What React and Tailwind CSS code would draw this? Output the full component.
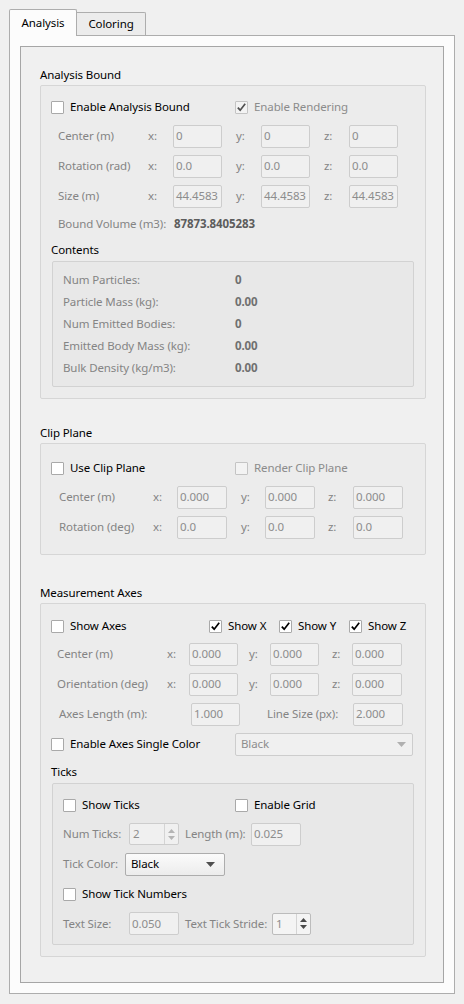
import React from "react";

const Check = ({ checked, disabled }) => (
  <span
    className={`w-[13px] h-[13px] shrink-0 border rounded-[1px] flex items-center justify-center ${
      disabled ? "bg-[#f3f3f3] border-[#c4c4c4]" : "bg-white border-[#a9a9a9]"
    }`}
  >
    {checked && (
      <svg width="11" height="11" viewBox="0 0 11 11">
        <path
          d="M1.8 5.6 L4.2 8.2 L9.2 1.8"
          fill="none"
          stroke={disabled ? "#505050" : "#000"}
          strokeWidth="1.7"
        />
      </svg>
    )}
  </span>
);

const CheckItem = ({ label, checked, disabled, className = "" }) => (
  <div className={`flex items-center gap-[6px] whitespace-nowrap ${className}`}>
    <Check checked={checked} disabled={disabled} />
    <span className={disabled ? "text-[#8b8b8b]" : "text-black"}>{label}</span>
  </div>
);

const Field = ({ value, className = "" }) => (
  <div
    className={`h-[23px] shrink-0 border border-[#cdcdcd] rounded-[2px] bg-[#f0f0f0] pl-[2px] flex items-center text-[#8d8d8d] ${className}`}
  >
    {value}
  </div>
);

const Lbl = ({ children, className = "" }) => (
  <span className={`shrink-0 whitespace-nowrap text-[#848484] ${className}`}>{children}</span>
);

const Spin = ({ value, className = "", disabled }) => (
  <div
    className={`h-[22px] shrink-0 border rounded-[2px] flex ${
      disabled ? "border-[#cdcdcd] bg-[#f0f0f0]" : "border-[#bcbcbc] bg-[#f4f4f4]"
    } ${className}`}
  >
    <div className="flex-1 pl-[3px] flex items-center text-[#8d8d8d]">{value}</div>
    <div className="w-[14px] border-l border-[#d4d4d4] flex flex-col items-center justify-center gap-[3px]">
      <svg width="7" height="4" viewBox="0 0 7 4">
        <path d="M0 4 L3.5 0 L7 4 Z" fill={disabled ? "#b4b4b4" : "#4a4a4a"} />
      </svg>
      <svg width="7" height="4" viewBox="0 0 7 4">
        <path d="M0 0 L3.5 4 L7 0 Z" fill={disabled ? "#b4b4b4" : "#4a4a4a"} />
      </svg>
    </div>
  </div>
);

const Arrow = ({ color }) => (
  <svg width="9" height="5" viewBox="0 0 9 5">
    <path d="M0 0 L4.5 5 L9 0 Z" fill={color} />
  </svg>
);

const Title = ({ children, className = "" }) => (
  <div className={`h-[20px] flex items-center text-black ${className}`}>{children}</div>
);

const StatRow = ({ label, value }) => (
  <div className="h-[22px] flex items-center">
    <span className="w-[172px] text-[#848484]">{label}</span>
    <span className="font-bold text-[#707070]">{value}</span>
  </div>
);

const App = () => {
  return (
    <div className="w-[464px] h-[1004px] bg-[#f0f0f0] pt-[9px] pl-[9px] font-['Segoe_UI','Noto_Sans',sans-serif] text-[11.5px] tracking-[-0.1px] leading-none">
      {/* tab bar */}
      <div className="relative z-10 flex items-end h-[26px]">
        <div className="w-[68px] h-[27px] -mb-[1px] border border-b-0 border-[#adadad] rounded-t-[2px] bg-[#fcfcfc] flex items-center justify-center text-black">
          Analysis
        </div>
        <div className="w-[69px] h-[23px] border border-l-0 border-b-0 border-[#adadad] rounded-tr-[2px] bg-[#ececec] flex items-center justify-center text-black">
          Coloring
        </div>
      </div>

      {/* tab pane */}
      <div className="w-[446px] h-[959px] border border-[#adadad] bg-[#fcfcfc] p-[10px]">
        <div className="h-full border border-[#a6a6a6] bg-[#f0f0f0] pl-[19px] pt-[18px]">
          {/* Analysis Bound */}
          <Title>Analysis Bound</Title>
          <div className="w-[386px] h-[314px] border border-[#d6d6d6] rounded-[2px] bg-[#ececec] pt-[10px]">
            <div className="h-[22px] flex items-center pl-[10px]">
              <CheckItem label="Enable Analysis Bound" className="w-[184px]" />
              <CheckItem label="Enable Rendering" checked disabled />
            </div>
            <div className="mt-[3px] pl-[17px]">
              {[
                ["Center (m)", "0", "0", "0"],
                ["Rotation (rad)", "0.0", "0.0", "0.0"],
                ["Size (m)", "44.4583", "44.4583", "44.4583"],
              ].map(([l, x, y, z]) => (
                <div key={l} className="h-[30px] flex items-center">
                  <Lbl className="w-[90px]">{l}</Lbl>
                  <Lbl className="w-[25px]">x:</Lbl>
                  <Field value={x} className="w-[49px]" />
                  <Lbl className="w-[25px] ml-[14px]">y:</Lbl>
                  <Field value={y} className="w-[49px]" />
                  <Lbl className="w-[25px] ml-[14px]">z:</Lbl>
                  <Field value={z} className="w-[49px]" />
                </div>
              ))}
              <div className="h-[26px] flex items-center">
                <Lbl className="w-[116px]">Bound Volume (m3):</Lbl>
                <span className="font-bold text-[#5c5c5c]">87873.8405283</span>
              </div>
            </div>
            <div className="h-[24px] pl-[10px] pt-[2px] flex items-center text-black">Contents</div>
            <div className="ml-[11px] w-[362px] h-[126px] border border-[#d2d2d2] rounded-[2px] bg-[#e8e8e8] pt-[7px] pl-[10px]">
              <StatRow label="Num Particles:" value="0" />
              <StatRow label="Particle Mass (kg):" value="0.00" />
              <StatRow label="Num Emitted Bodies:" value="0" />
              <StatRow label="Emitted Body Mass (kg):" value="0.00" />
              <StatRow label="Bulk Density (kg/m3):" value="0.00" />
            </div>
          </div>

          {/* Clip Plane */}
          <Title className="mt-[24px]">Clip Plane</Title>
          <div className="w-[386px] h-[112px] border border-[#d6d6d6] rounded-[2px] bg-[#ececec] pt-[13px]">
            <div className="h-[22px] flex items-center pl-[10px]">
              <CheckItem label="Use Clip Plane" className="w-[184px]" />
              <CheckItem label="Render Clip Plane" disabled />
            </div>
            <div className="mt-[3px] pl-[18px]">
              {[
                ["Center (m)", "0.000"],
                ["Rotation (deg)", "0.0"],
              ].map(([l, v]) => (
                <div key={l} className="h-[30px] flex items-center">
                  <Lbl className="w-[94px]">{l}</Lbl>
                  <Lbl className="w-[24px]">x:</Lbl>
                  <Field value={v} className="w-[50px]" />
                  <Lbl className="w-[24px] ml-[14px]">y:</Lbl>
                  <Field value={v} className="w-[50px]" />
                  <Lbl className="w-[25px] ml-[13px]">z:</Lbl>
                  <Field value={v} className="w-[50px]" />
                </div>
              ))}
            </div>
          </div>

          {/* Measurement Axes */}
          <Title className="mt-[28px]">Measurement Axes</Title>
          <div className="w-[386px] h-[354px] border border-[#d6d6d6] rounded-[2px] bg-[#ececec] pt-[11px]">
            <div className="h-[22px] flex items-center pl-[10px]">
              <CheckItem label="Show Axes" className="w-[158px]" />
              <CheckItem label="Show X" checked className="w-[70px]" />
              <CheckItem label="Show Y" checked className="w-[70px]" />
              <CheckItem label="Show Z" checked />
            </div>
            <div className="mt-[2px] pl-[16px]">
              {[
                ["Center (m)", "0.000"],
                ["Orientation (deg)", "0.000"],
              ].map(([l, v]) => (
                <div key={l} className="h-[30px] flex items-center">
                  <Lbl className="w-[110px]">{l}</Lbl>
                  <Lbl className="w-[22px]">x:</Lbl>
                  <Field value={v} className="w-[49px]" />
                  <Lbl className="w-[21px] ml-[11px]">y:</Lbl>
                  <Field value={v} className="w-[49px]" />
                  <Lbl className="w-[20px] ml-[13px]">z:</Lbl>
                  <Field value={v} className="w-[50px]" />
                </div>
              ))}
              <div className="h-[30px] flex items-center">
                <Lbl className="w-[132px] ml-[2px]">Axes Length (m):</Lbl>
                <Field value="1.000" className="w-[49px]" />
                <Lbl className="w-[86px] ml-[27px]">Line Size (px):</Lbl>
                <Field value="2.000" className="w-[50px]" />
              </div>
            </div>
            <div className="h-[30px] flex items-center pl-[10px]">
              <CheckItem label="Enable Axes Single Color" className="w-[184px]" />
              <div className="w-[178px] h-[23px] border border-[#cdcdcd] rounded-[2px] bg-[#f0f0f0] flex items-center justify-between pl-[5px] pr-[6px] text-[#8d8d8d]">
                <span>Black</span>
                <Arrow color="#b0b0b0" />
              </div>
            </div>
            <div className="h-[24px] pl-[10px] pt-[2px] flex items-center text-black">Ticks</div>
            <div className="ml-[11px] w-[362px] h-[162px] border border-[#d2d2d2] rounded-[2px] bg-[#e8e8e8] pt-[10px] pl-[10px]">
              <div className="h-[22px] flex items-center">
                <CheckItem label="Show Ticks" className="w-[172px]" />
                <CheckItem label="Enable Grid" />
              </div>
              <div className="mt-[3px] h-[30px] flex items-center">
                <Lbl className="w-[66px]">Num Ticks:</Lbl>
                <Spin value="2" disabled className="w-[50px]" />
                <Lbl className="w-[66px] ml-[6px]">Length (m):</Lbl>
                <Field value="0.025" className="w-[50px]" />
              </div>
              <div className="h-[30px] flex items-center">
                <Lbl className="w-[62px]">Tick Color:</Lbl>
                <div className="w-[100px] h-[23px] border border-[#adadad] rounded-[2px] bg-gradient-to-b from-[#fbfbfb] to-[#ececec] flex items-center justify-between pl-[5px] pr-[9px] text-black">
                  <span>Black</span>
                  <Arrow color="#505050" />
                </div>
              </div>
              <div className="h-[30px] flex items-center">
                <CheckItem label="Show Tick Numbers" />
              </div>
              <div className="h-[29px] flex items-center">
                <Lbl className="w-[66px]">Text Size:</Lbl>
                <Field value="0.050" className="w-[50px]" />
                <Lbl className="w-[87px] ml-[6px]">Text Tick Stride:</Lbl>
                <Spin value="1" className="w-[39px]" />
              </div>
            </div>
          </div>
        </div>
      </div>
    </div>
  );
};

export default App;
